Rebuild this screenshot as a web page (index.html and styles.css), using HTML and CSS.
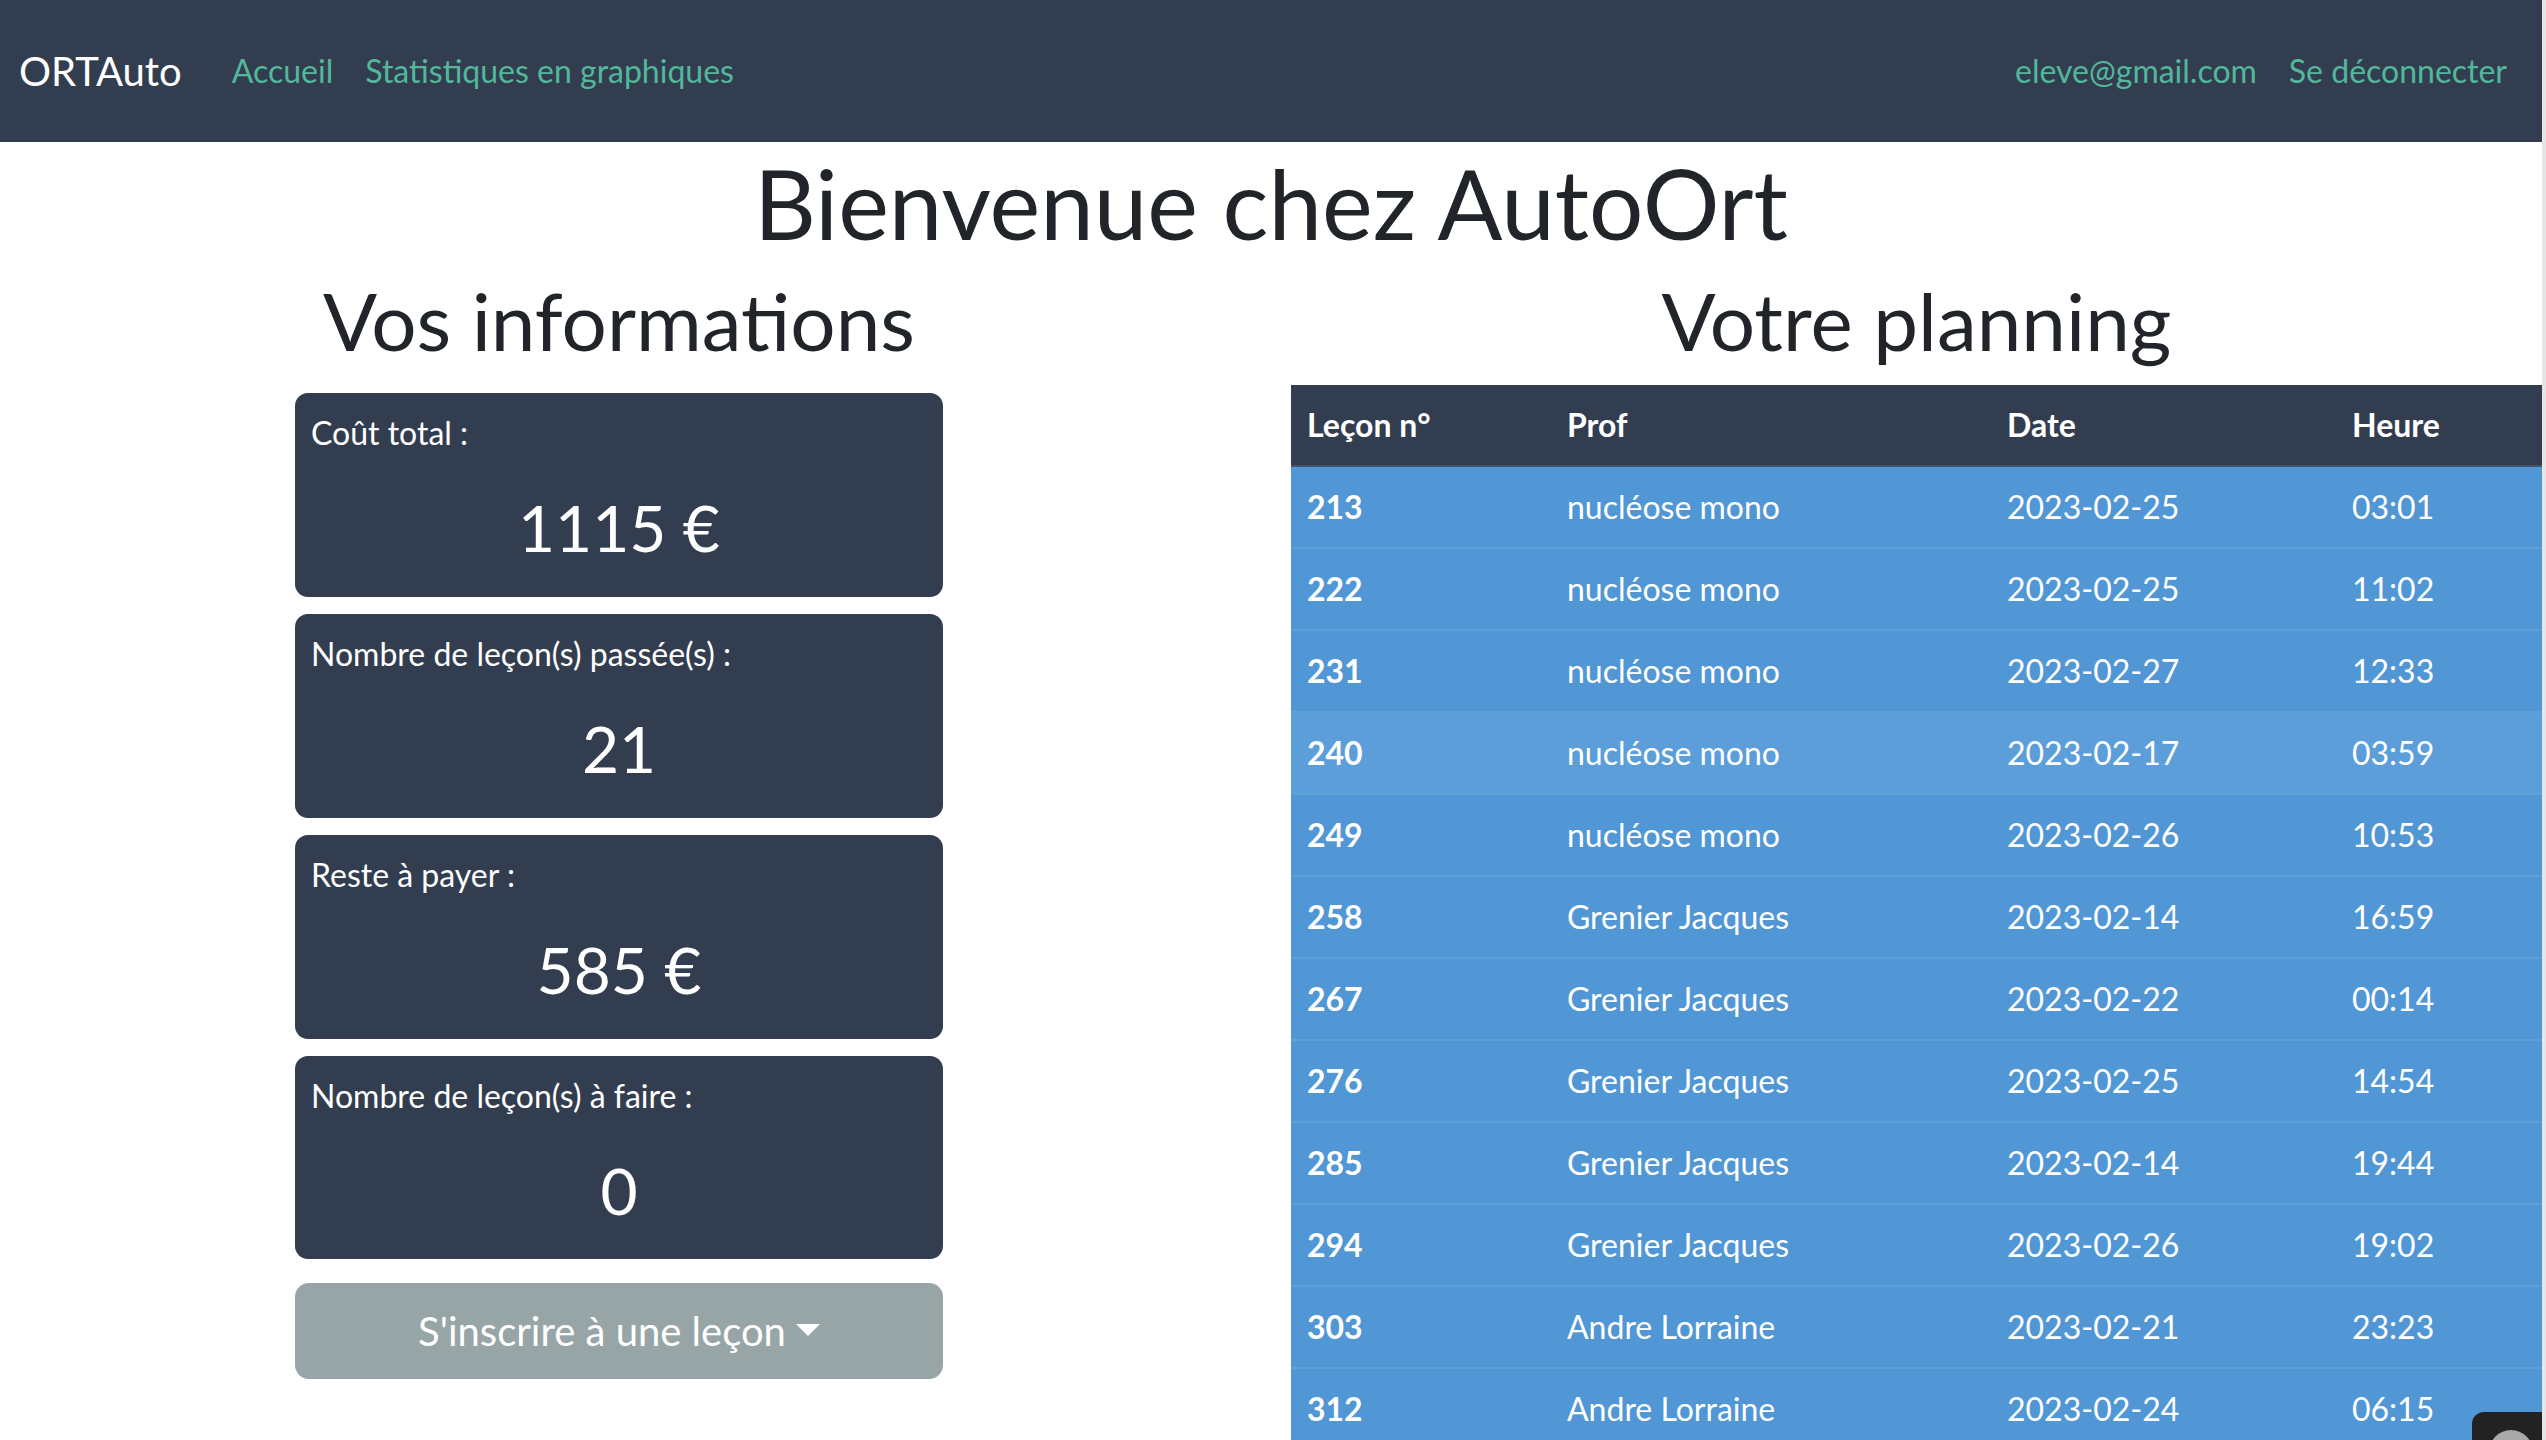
FILE: index.html
```html
<!DOCTYPE html>
<html lang="fr">
<head>
<meta charset="utf-8">
<title>ORTAuto</title>
<link rel="stylesheet" href="styles.css">
</head>
<body>
<div class="page">
  <nav class="navbar">
    <a class="brand" href="#">ORTAuto</a>
    <ul class="nav-links">
      <li><a href="#">Accueil</a></li>
      <li><a href="#">Statistiques en graphiques</a></li>
    </ul>
    <ul class="nav-links nav-right">
      <li><a href="#">eleve@gmail.com</a></li>
      <li><a href="#">Se déconnecter</a></li>
    </ul>
  </nav>

  <h1 class="title">Bienvenue chez AutoOrt</h1>

  <main class="columns">
    <section class="col-left">
      <h2 class="section-title">Vos informations</h2>
      <div class="cards">
        <div class="card">
          <div class="card-label">Coût total :</div>
          <div class="card-value">1115 €</div>
        </div>
        <div class="card">
          <div class="card-label">Nombre de leçon(s) passée(s) :</div>
          <div class="card-value">21</div>
        </div>
        <div class="card">
          <div class="card-label">Reste à payer :</div>
          <div class="card-value">585 €</div>
        </div>
        <div class="card">
          <div class="card-label">Nombre de leçon(s) à faire :</div>
          <div class="card-value">0</div>
        </div>
        <button class="btn-inscrire" type="button">S'inscrire à une leçon<span class="caret"></span></button>
      </div>
    </section>

    <section class="col-right">
      <h2 class="section-title">Votre planning</h2>
      <table class="planning">
        <colgroup>
          <col class="c1"><col class="c2"><col class="c3"><col class="c4">
        </colgroup>
        <thead>
          <tr><th>Leçon n°</th><th>Prof</th><th>Date</th><th>Heure</th></tr>
        </thead>
        <tbody>
          <tr><th>213</th><td>nucléose mono</td><td>2023-02-25</td><td>03:01</td></tr>
          <tr><th>222</th><td>nucléose mono</td><td>2023-02-25</td><td>11:02</td></tr>
          <tr><th>231</th><td>nucléose mono</td><td>2023-02-27</td><td>12:33</td></tr>
          <tr class="hover"><th>240</th><td>nucléose mono</td><td>2023-02-17</td><td>03:59</td></tr>
          <tr><th>249</th><td>nucléose mono</td><td>2023-02-26</td><td>10:53</td></tr>
          <tr><th>258</th><td>Grenier Jacques</td><td>2023-02-14</td><td>16:59</td></tr>
          <tr><th>267</th><td>Grenier Jacques</td><td>2023-02-22</td><td>00:14</td></tr>
          <tr><th>276</th><td>Grenier Jacques</td><td>2023-02-25</td><td>14:54</td></tr>
          <tr><th>285</th><td>Grenier Jacques</td><td>2023-02-14</td><td>19:44</td></tr>
          <tr><th>294</th><td>Grenier Jacques</td><td>2023-02-26</td><td>19:02</td></tr>
          <tr><th>303</th><td>Andre Lorraine</td><td>2023-02-21</td><td>23:23</td></tr>
          <tr><th>312</th><td>Andre Lorraine</td><td>2023-02-24</td><td>06:15</td></tr>
        </tbody>
      </table>
    </section>
  </main>
</div>
<div class="scroll-strip"></div>
<div class="widget"><span class="widget-dot"></span></div>
</body>
</html>
```

FILE: styles.css
```css
html, body {
  margin: 0;
  padding: 0;
  height: 1440px;
  overflow: hidden;
}

body {
  display: flex;
  font-family: Lato, "Open Sans", "Liberation Sans", sans-serif;
  color: #212529;
  background: #ffffff;
}

.page {
  flex: 1;
  min-width: 0;
}

.scroll-strip {
  width: 4px;
  background: #e6e6e6;
}

/* Navbar */
.navbar {
  height: 142px;
  background: #323e50;
  display: flex;
  align-items: center;
  padding: 0 35px 0 19px;
  box-sizing: border-box;
}

.brand {
  color: #ffffff;
  font-size: 40px;
  text-decoration: none;
  margin-right: 34px;
  line-height: 60px;
}

.nav-links {
  list-style: none;
  margin: 0;
  padding: 0;
  display: flex;
}

.nav-links a {
  display: block;
  color: #53b79b;
  font-size: 32px;
  line-height: 48px;
  padding: 0 16px;
  text-decoration: none;
}

.nav-right {
  margin-left: auto;
}

.nav-right li:last-child a {
  padding-right: 0;
}

/* Titles */
.title {
  margin: 3px 0 0;
  text-align: center;
  font-size: 96px;
  font-weight: 400;
  line-height: 1.2;
}

.section-title {
  margin: 12px 0 0;
  text-align: center;
  font-size: 80px;
  font-weight: 400;
  line-height: 1.2;
}

/* Columns */
.columns {
  display: grid;
  grid-template-columns: 1238px 1251px;
  column-gap: 53px;
}

.col-left .cards {
  width: 648px;
  margin: 25px auto 0;
  display: flex;
  flex-direction: column;
  gap: 17px;
}

.card {
  background: #323e50;
  color: #ffffff;
  border-radius: 13px;
  padding: 16px 16px;
}

.card-label {
  font-size: 32px;
  line-height: 48px;
}

.card-value {
  font-size: 64px;
  line-height: 1.2;
  text-align: center;
  margin: 33px 0 14px;
}

.btn-inscrire {
  margin-top: 7px;
  background: #97a5a6;
  color: #ffffff;
  border: none;
  border-radius: 14px;
  font-family: inherit;
  font-size: 40px;
  line-height: 60px;
  padding: 18px 24px;
  text-align: center;
}

.caret {
  display: inline-block;
  margin-left: 10px;
  vertical-align: 10px;
  border-top: 12px solid #ffffff;
  border-left: 12px solid transparent;
  border-right: 12px solid transparent;
}

/* Table */
.planning {
  width: 1251px;
  margin-top: 17px;
  border-collapse: collapse;
  table-layout: fixed;
  font-size: 32px;
  color: #ffffff;
}

.planning .c1 { width: 260px; }
.planning .c2 { width: 440px; }
.planning .c3 { width: 345px; }
.planning .c4 { width: 206px; }

.planning th,
.planning td {
  text-align: left;
  padding: 16px 16px;
  line-height: 48px;
  white-space: nowrap;
}

.planning thead tr {
  background: #323e50;
  border-bottom: 2px solid #46546a;
}

.planning thead th {
  font-weight: 700;
}

.planning tbody tr {
  background: #5196d5;
  border-bottom: 2px solid #5ea0da;
}

.planning tbody th {
  font-weight: 700;
}

.planning tbody tr.hover {
  background: #5c9ed9;
}

/* Bottom-right floating widget */
.widget {
  position: fixed;
  left: 2472px;
  top: 1412px;
  width: 70px;
  height: 70px;
  background: #222222;
  border-radius: 12px 0 0 0;
}

.widget-dot {
  position: absolute;
  left: 17px;
  top: 18px;
  width: 44px;
  height: 44px;
  border-radius: 50%;
  background: #a9a9a9;
}
```
